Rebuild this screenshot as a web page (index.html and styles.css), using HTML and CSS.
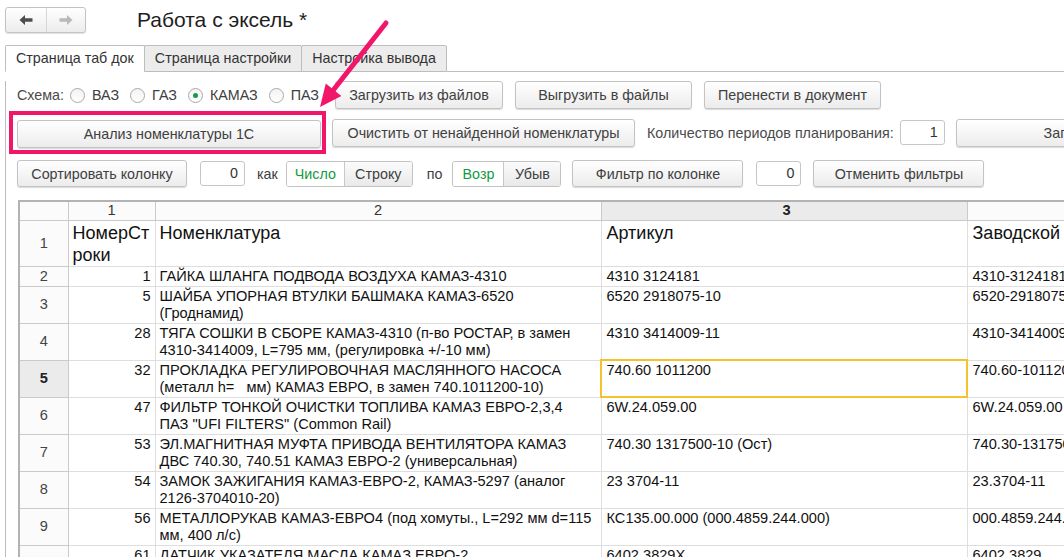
FILE: index.html
```html
<!DOCTYPE html>
<html lang="ru">
<head>
<meta charset="utf-8">
<title>Работа с эксель</title>
<link rel="stylesheet" href="styles.css">
</head>
<body>
<div class="top">
  <div class="nav">
    <span class="nav-btn">
      <svg width="14" height="12" viewBox="0 0 14 12"><path d="M0.5 6 L6 1 V4.2 H13.5 V7.8 H6 V11 Z" fill="#4d4d4d"/></svg>
    </span>
    <span class="nav-btn">
      <svg width="14" height="12" viewBox="0 0 14 12"><path d="M13.5 6 L8 1 V4.2 H0.5 V7.8 H8 V11 Z" fill="#b9b9b9"/></svg>
    </span>
  </div>
  <h1 class="title">Работа с эксель *</h1>
</div>

<div class="tabs">
  <div class="tab active">Страница таб док</div>
  <div class="tab">Страница настройки</div>
  <div class="tab">Настройка вывода</div>
  <div class="tab-fill"></div>
</div>

<div class="panel">
  <div class="row r1">
    <span class="lbl">Схема:</span>
    <label class="radio"><span class="circle"></span>ВАЗ</label>
    <label class="radio"><span class="circle"></span>ГАЗ</label>
    <label class="radio"><span class="circle on"></span>КАМАЗ</label>
    <label class="radio"><span class="circle"></span>ПАЗ</label>
    <button class="btn w-load">Загрузить из файлов</button>
    <button class="btn w-unload">Выгрузить в файлы</button>
    <button class="btn w-move">Перенести в документ</button>
  </div>

  <div class="row r2">
    <div class="mark">
      <button class="btn w-analyz">Анализ номенклатуры 1С</button>
    </div>
    <button class="btn w-clear">Очистить от ненайденной номенклатуры</button>
    <span class="lbl periods">Количество периодов планирования:</span>
    <span class="num">1</span>
    <button class="btn w-fill">Загрузить</button>
  </div>

  <div class="row r3">
    <button class="btn w-sort">Сортировать колонку</button>
    <span class="num">0</span>
    <span class="word">как</span>
    <div class="seg"><span class="on s-num">Число</span><span class="off s-str">Строку</span></div>
    <span class="word w-po">по</span>
    <div class="seg"><span class="on s-asc">Возр</span><span class="off s-desc">Убыв</span></div>
    <button class="btn w-filter">Фильтр по колонке</button>
    <span class="num">0</span>
    <button class="btn w-cancel">Отменить фильтры</button>
  </div>

  <table class="grid">
    <colgroup>
      <col class="c-rh"><col class="c-1"><col class="c-2"><col class="c-3"><col class="c-4">
    </colgroup>
    <tr class="colhead">
      <td class="ch"></td><td class="ch">1</td><td class="ch">2</td><td class="ch sel-h">3</td><td class="ch"></td>
    </tr>
    <tr class="h1">
      <td class="rh">1</td>
      <td class="big">НомерСт<br>роки</td>
      <td class="big">Номенклатура</td>
      <td class="big">Артикул</td>
      <td class="big">Заводской</td>
    </tr>
    <tr class="s">
      <td class="rh">2</td><td class="n">1</td>
      <td>ГАЙКА ШЛАНГА ПОДВОДА ВОЗДУХА КАМАЗ-4310</td>
      <td>4310 3124181</td><td>4310-3124181</td>
    </tr>
    <tr class="d">
      <td class="rh">3</td><td class="n">5</td>
      <td>ШАЙБА УПОРНАЯ ВТУЛКИ БАШМАКА КАМАЗ-6520<br>(Гроднамид)</td>
      <td>6520 2918075-10</td><td>6520-2918075-10</td>
    </tr>
    <tr class="d">
      <td class="rh">4</td><td class="n">28</td>
      <td>ТЯГА СОШКИ В СБОРЕ КАМАЗ-4310 (п-во РОСТАР, в замен<br>4310-3414009, L=795 мм, (регулировка +/-10 мм)</td>
      <td>4310 3414009-11</td><td>4310-3414009-11</td>
    </tr>
    <tr class="d">
      <td class="rh sel-h">5</td><td class="n">32</td>
      <td>ПРОКЛАДКА РЕГУЛИРОВОЧНАЯ МАСЛЯННОГО НАСОСА<br>(металл h=&nbsp;&nbsp;&nbsp;мм) КАМАЗ ЕВРО, в замен 740.1011200-10)</td>
      <td class="cur">740.60 1011200</td><td>740.60-1011200</td>
    </tr>
    <tr class="d">
      <td class="rh">6</td><td class="n">47</td>
      <td>ФИЛЬТР ТОНКОЙ ОЧИСТКИ ТОПЛИВА КАМАЗ ЕВРО-2,3,4<br>ПАЗ "UFI FILTERS" (Common Rail)</td>
      <td>6W.24.059.00</td><td>6W.24.059.00</td>
    </tr>
    <tr class="d">
      <td class="rh">7</td><td class="n">53</td>
      <td>ЭЛ.МАГНИТНАЯ МУФТА ПРИВОДА ВЕНТИЛЯТОРА КАМАЗ<br>ДВС 740.30, 740.51 КАМАЗ ЕВРО-2 (универсальная)</td>
      <td>740.30 1317500-10 (Ост)</td><td>740.30-1317500-10</td>
    </tr>
    <tr class="d">
      <td class="rh">8</td><td class="n">54</td>
      <td>ЗАМОК ЗАЖИГАНИЯ КАМАЗ-ЕВРО-2, КАМАЗ-5297 (аналог<br>2126-3704010-20)</td>
      <td>23 3704-11</td><td>23.3704-11</td>
    </tr>
    <tr class="d">
      <td class="rh">9</td><td class="n">56</td>
      <td>МЕТАЛЛОРУКАВ КАМАЗ-ЕВРО4 (под хомуты., L=292 мм d=115<br>мм, 400 л/с)</td>
      <td>КС135.00.000 (000.4859.244.000)</td><td>000.4859.244.000</td>
    </tr>
    <tr class="d">
      <td class="rh">10</td><td class="n">61</td>
      <td>ДАТЧИК УКАЗАТЕЛЯ МАСЛА КАМАЗ ЕВРО-2</td>
      <td>6402.3829Х</td><td>6402.3829</td>
    </tr>
  </table>
</div>

<svg class="arrow" width="1064" height="557" viewBox="0 0 1064 557">
  <line x1="386" y1="23" x2="331" y2="93" stroke="#f2166b" stroke-width="5" stroke-linecap="round"/>
  <polygon points="320,107 325.8,83.5 341.4,95.9" fill="#f2166b"/>
</svg>
</body>
</html>
```

FILE: styles.css
```css
* { box-sizing: border-box; }
html, body { margin: 0; }
body {
  width: 1064px;
  height: 557px;
  overflow: hidden;
  position: relative;
  font-family: "Liberation Sans", Arial, sans-serif;
  font-size: 14.3px;
  color: #333;
  background: #fff;
}

/* header */
.top { display: flex; align-items: center; padding: 7px 0 0 5px; }
.nav {
  display: flex;
  height: 26px;
  border: 1px solid #c3c3c3;
  border-radius: 3px;
  background: linear-gradient(#ffffff, #ececec);
  box-shadow: 0 1px 1px rgba(0,0,0,.12);
}
.nav-btn { width: 40px; display: flex; align-items: center; justify-content: center; }
.nav-btn + .nav-btn { border-left: 1px solid #d6d6d6; width: 39px; }
.title { margin: 0 0 0 51px; font-size: 21px; font-weight: normal; color: #1e1e1e; }

/* tabs */
.tabs { display: flex; margin-top: 12px; padding-left: 5px; height: 27px; }
.tab {
  padding: 0 10px;
  line-height: 25px;
  border: 1px solid #bdbdbd;
  background: #ececec;
  margin-left: -1px;
  border-radius: 2px 2px 0 0;
  color: #333;
  white-space: nowrap;
}
.tab.active { background: #fff; border-bottom-color: #fff; margin-left: 0; }
.tab-fill { flex: 1; border-bottom: 1px solid #bdbdbd; }

/* panel */
.panel { margin-left: 5px; border-left: 1px solid #bdbdbd; padding-left: 11px; height: 485px; }
.row { display: flex; align-items: center; white-space: nowrap; }
.r1 { margin-top: 9px; height: 28px; }
.r2 { margin-top: 2px; }
.r3 { margin-top: 6px; }

.lbl { color: #4a4a4a; }
.r1 .lbl { margin-right: 6px; }
.radio { display: flex; align-items: center; gap: 7px; margin-right: 11px; color: #404040; }
.circle {
  width: 15px; height: 15px; border-radius: 50%;
  border: 1px solid #a9a9a9;
  background: linear-gradient(#f3f3f3, #ffffff);
  display: flex; align-items: center; justify-content: center;
}
.circle.on::after { content: ""; width: 5px; height: 5px; border-radius: 50%; background: #179a45; }

.btn {
  flex-shrink: 0;
  height: 28px;
  border: 1px solid #c3c3c3;
  border-radius: 3px;
  background: linear-gradient(#ffffff, #ececec);
  box-shadow: 0 1px 1px rgba(0,0,0,.15);
  font: inherit;
  color: #404040;
  padding: 0 8px;
  text-align: center;
  white-space: nowrap;
}
.w-load { width: 168px; margin-left: 5px; }
.w-unload { width: 177px; margin-left: 12px; }
.w-move { width: 177px; margin-left: 12px; }

.mark {
  flex-shrink: 0;
  margin-left: -8px;
  border: 4px solid #f2166b;
  padding: 5px 1px 2px 4px;
}
.w-analyz { width: 304px; }
.w-clear { width: 303px; margin-left: 6px; }
.periods { margin-left: 12px; }
.w-fill { width: 241px; margin-left: 11px; }

.num {
  flex-shrink: 0;
  width: 45px; height: 25px;
  border: 1px solid #c6c6c6;
  border-radius: 3px;
  text-align: right;
  padding-right: 6px;
  line-height: 23px;
  color: #333;
  background: #fff;
}
.r2 .num { margin-left: 6px; }
.w-sort { width: 170px; }
.r3 .btn { height: 27px; }
.r3 .num { margin-left: 13px; }
.word { margin: 0 8px 0 12px; color: #404040; }
.word.w-po { margin: 0 10px 0 14px; }
.seg {
  display: flex;
  height: 26px;
  border: 1px solid #c3c3c3;
  border-radius: 3px;
  overflow: hidden;
  flex-shrink: 0;
}
.seg span { line-height: 24px; text-align: center; }
.seg .on { color: #149a3e; background: #fff; }
.seg .off { background: linear-gradient(#fbfbfb, #e9e9e9); border-left: 1px solid #c8c8c8; color: #404040; }
.s-num { width: 57px; }
.s-str { width: 68px; }
.s-asc { width: 50px; }
.s-desc { width: 57px; }
.w-filter { width: 171px; margin-left: 11px; }
.w-cancel { width: 171px; margin-left: 12px; }

/* grid */
.grid {
  margin: 13px 0 0 1px;
  border-collapse: collapse;
  table-layout: fixed;
  width: 1215px;
  border-top: 2px solid #b3b3b3;
  border-left: 2px solid #b3b3b3;
}
.c-rh { width: 49px; }
.c-1 { width: 87px; }
.c-2 { width: 446px; }
.c-3 { width: 366px; }
.c-4 { width: 267px; }

.grid td {
  border: 1px solid #dedede;
  padding: 1px 4px 0;
  vertical-align: top;
  line-height: 17px;
  font-size: 14.6px;
  color: #111;
  white-space: nowrap;
  overflow: hidden;
}
.grid td.ch {
  height: 19px;
  padding: 0;
  text-align: center;
  vertical-align: middle;
  background: #fbfbfb;
  border-color: #cacaca;
  color: #333;
}
.grid td.rh {
  padding: 0;
  text-align: center;
  vertical-align: middle;
  background: #fbfbfb;
  border-color: #cacaca;
  color: #444;
}
.grid td.sel-h { background: #ebebeb; font-weight: bold; color: #222; }
.grid td.n { text-align: right; }
.grid td.big { font-size: 18px; line-height: 22px; padding-top: 1px; }
.grid td:nth-child(4), .grid td:nth-child(5) { padding-left: 5px; }
.grid td.cur { outline: 2px solid #f4c22b; outline-offset: -1px; }

.h1 { height: 46px; }
.s { height: 20px; }
.d { height: 37px; }

.arrow { position: absolute; left: 0; top: 0; pointer-events: none; }
```
